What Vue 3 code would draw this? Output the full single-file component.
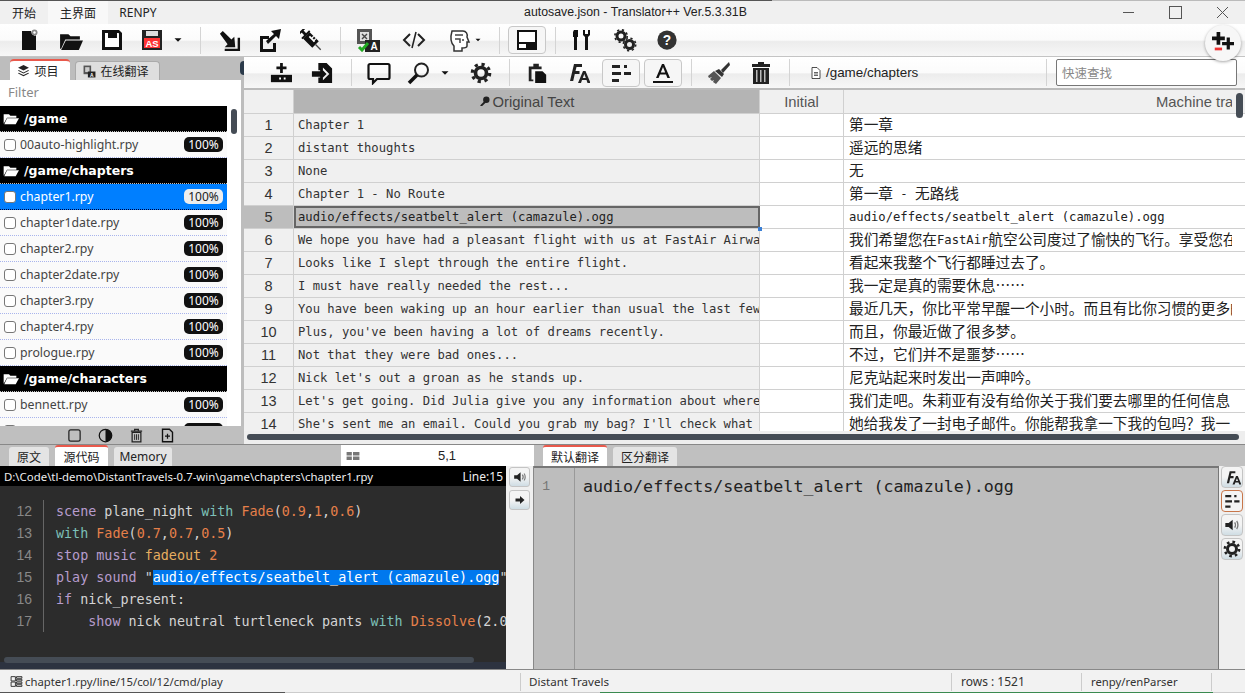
<script setup>
const icons = {
  new: '<path d="M6 3h9l1 3 3 2 1-1v15H6z" fill="#111"/><circle cx="18.500" cy="4.500" r="3" fill="#888"/><circle cx="18.500" cy="4.500" r="1.200" fill="#fff"/>',
  open: '<path d="M2 6h8l2 2h9v3H7L3 20H2z" fill="#111"/><path d="M7.500 12H24l-4 9H3z" fill="#111"/>',
  save: '<path d="M2 2h17l3 3v17H2z" fill="#111"/><path d="M5 5h3v5h9V5h1.500v0V5l.5.5V19H5z" fill="#fff"/><path d="M5 13.500h14V19H5z" fill="#fff"/><path d="M13 3.500h3v4h-3z" fill="#111"/>',
  saveas: '<path d="M2 2h20v20H2z" fill="#222"/><path d="M6 3h12v5H6z" fill="#ddd"/><path d="M4 10h16v10H4z" fill="#f33"/><text x="12" y="18.500" text-anchor="middle" font-family="Liberation Sans,sans-serif" font-weight="700" font-size="9.500" fill="#fff">AS</text>',
  caret: '<path d="M6 9h12l-6 6z" fill="#111"/>',
  imp: '<path d="M2 5l3-3 9 9 3-3 1 11H7l3-3z" fill="#111"/><path d="M20.500 9h2.500v14H7v-2.500h13.500z" fill="#111"/>',
  exp: '<path d="M3 8h9v3H6v10h10v-6h3v9H3z" fill="#111"/><path d="M9 13L17 6l-3-3 10-2-2 10-3-3-8 8z" fill="#111"/>',
  syr: '<g transform="rotate(45 12 12)"><path d="M-3 6h2v12h-2zM-1 10.500h4v3h-4zM3 6h2v12H3zM5 7h14v10H5z" fill="#111"/><path d="M8 9.500h8v2H8z" fill="#fff"/><path d="M10.500 7h1.300v4h-1.300zM14 7h1.300v4H14z" fill="#fff"/><path d="M19 11.300h8v1.400h-8z" fill="#444"/></g>',
  trans: '<path d="M1 1h15v15H1z" fill="#555"/><path d="M4 4h9v9H4z" fill="#ddd"/><path d="M6 6l5 5M11 6l-5 5" stroke="#444" stroke-width="1.400"/><path d="M9 12h15v12H9z" fill="#222"/><text x="18" y="22" text-anchor="middle" font-family="Liberation Sans,sans-serif" font-weight="700" font-size="10" fill="#fff">A</text><path d="M3 19l3 3 6-7" stroke="#2a2" stroke-width="3" fill="none"/>',
  code: '<path d="M8 6l-6 6 6 6M16 6l6 6-6 6" stroke="#222" stroke-width="2" fill="none"/><path d="M14 4l-4 16" stroke="#222" stroke-width="1.600"/>',
  head: '<path d="M5 3h11c3 0 5 3 4 6l2 5h-2v4c0 2-2 2-5 2v3H7v-5c-3-3-4-8-2-15z" fill="#fff" stroke="#333" stroke-width="1.500"/><path d="M8 7h8M8 11h5v4M15 12h2" stroke="#444" stroke-width="1.500" fill="none"/>',
  layout: '<path d="M2 2h20v20H2z" fill="#111"/><path d="M4 4h16v10H4zM4 16h7v4H4z" fill="#fff"/>',
  tools: '<path d="M4 2h4v7H7v13H4V9H3V4z" fill="#111"/><path d="M13 2v5l2 2v13h3V9l2-2V2l-2 0v4h-3V2z" fill="#111"/>',
  gears: '<g fill="none" stroke="#222"><circle cx="8" cy="8" r="4" stroke-width="3"/><circle cx="8" cy="8" r="6.200" stroke-width="1.600" stroke-dasharray="2.200 2.700"/><circle cx="16.500" cy="16.500" r="4" stroke-width="3"/><circle cx="16.500" cy="16.500" r="6.200" stroke-width="1.600" stroke-dasharray="2.200 2.700"/></g>',
  help: '<circle cx="12" cy="12" r="10.500" fill="#333"/><text x="12" y="17.500" text-anchor="middle" font-family="Liberation Sans,sans-serif" font-weight="700" font-size="15" fill="#fff">?</text>',
  addrow: '<path d="M11 1h3v4h4v3h-4v4h-3V8H7V5h4z" fill="#111"/><path d="M1 14h23v8H1z" fill="#111"/><path d="M10 17h2v2h-2zM15 17h2v2h-2z" fill="#fff"/>',
  impf: '<path d="M8 1h9l6 6v16H8v-6h5v3l7-7-7-7v3H8z" fill="#111"/><path d="M1 10h9V6l7 7-7 7v-4H1z" fill="#111"/>',
  comment: '<path d="M3 3h18a1.500 1.500 0 0 1 1.500 1.500v12A1.500 1.500 0 0 1 21 18H10l-4 4v-4H3a1.500 1.500 0 0 1-1.500-1.500v-12A1.500 1.500 0 0 1 3 3z" fill="none" stroke="#111" stroke-width="2.200"/>',
  search: '<circle cx="14.500" cy="9" r="6.500" fill="none" stroke="#222" stroke-width="2"/><path d="M10 14L2 22" stroke="#111" stroke-width="3.500"/>',
  gear: '<circle cx="12" cy="12" r="6" fill="none" stroke="#222" stroke-width="4"/><circle cx="12" cy="12" r="9.500" fill="none" stroke="#222" stroke-width="3.500" stroke-dasharray="3.500 4"/>',
  paste: '<path d="M3 5h5V2h6v3h3v3H6v11h2v2H3z" fill="#222"/><path d="M10 10h8l4 4v9H10z" fill="#111"/>',
  fonta: '<path d="M4 20L8 3h8v3h-5.500l-1 4h4v3H8.800L7.200 20z" fill="#222"/><path fill-rule="evenodd" d="M12 22l5-12h2.500l5 12h-3l-1-3H16l-1 3zM16.800 17h3l-1.500-4z" fill="#222"/>',
  align: '<path d="M3 4h8v3H3zM15 4h3v3h-3zM3 11h9v3H3zM15 11h7v3h-7zM3 18h7v3H3z" fill="#222"/>',
  under: '<path d="M5 17L11 3h2l6 14h-2.600l-1.400-3.500H9L7.600 17zM9.800 11.500h4.400L12 6z" fill="#111"/><path d="M2 20h20v2H2z" fill="#111"/>',
  brush: '<path d="M23 1l-8 8 2 3 7-8z" fill="#333"/><path d="M13 8l5 5-2 3-7-6z" fill="#333"/><path d="M8 10l7 7-5 6-3-2 1-2-2 1-2-2 2-2-3 1-1-2z" fill="#555"/>',
  trash: '<path d="M3 3h18v3H3zM9 1h6v2H9z" fill="#222"/><path d="M4 7h16v16H4z" fill="#222"/><path d="M7 9h1.500v12H7zM11 9h1.500v12H11zM15 9h1.500v12H15z" fill="#bbb"/>',
  file: '<path d="M4 1h10l6 6v16H4z" fill="#fff" stroke="#222" stroke-width="1.600"/><path d="M8 11h8M8 14h8M8 17h8" stroke="#222" stroke-width="1.400"/>',
  layers: '<path d="M12 2l10 5-10 5L2 7z" fill="#222"/><path d="M3 11l9 4.500 9-4.500 1 1.500-10 5-10-5zM3 16l9 4.500 9-4.500 1 1.500-10 5-10-5z" fill="#222"/>',
  tl: '<path d="M1 1h14v16H1z" fill="#555"/><path d="M4 4h8v9H4z" fill="#ccc"/><path d="M9 12h14v11H9z" fill="#222"/><text x="16" y="21.500" text-anchor="middle" font-family="Liberation Sans,sans-serif" font-weight="700" font-size="9" fill="#fff">A</text>',
  folder: '<path d="M1 5h8l2 2h9v3H6l-5 9z" fill="#fff"/><path d="M6 11h18l-5 9H2z" fill="#fff"/>',
  key: '<circle cx="16" cy="8" r="7" fill="#222"/><path d="M12 11l-9 9v2h4l8-8z" fill="#222"/>',
  square: '<rect x="3" y="3" width="18" height="18" rx="3" fill="none" stroke="#222" stroke-width="2"/>',
  contrast: '<circle cx="12" cy="12" r="10" fill="none" stroke="#111" stroke-width="2"/><path d="M12 2a10 10 0 0 1 0 20z" fill="#111"/>',
  bin: '<path d="M3 5h18M9 5V2h6v3" fill="none" stroke="#222" stroke-width="2"/><path d="M5 7h14v15H5z" fill="none" stroke="#222" stroke-width="2"/><path d="M9 10v9M12 10v9M15 10v9" stroke="#222" stroke-width="1.500"/>',
  newdoc: '<path d="M4 2h11l5 5v15H4z" fill="none" stroke="#111" stroke-width="2.200"/><path d="M11 9h2v3h3v2h-3v3h-2v-3H8v-2h3z" fill="#111"/>',
  speaker: '<path d="M2 9h5l6-5v16l-6-5H2z" fill="#222"/><path d="M16 8c1.500 2 1.500 6 0 8M19 6c2.500 3 2.500 9 0 12" fill="none" stroke="#777" stroke-width="2"/>',
  arrow: '<path d="M3 9h9V4l9 8-9 8v-5H3z" fill="#222"/>',
  plusplus: '<path d="M5 0h4v5h5v4H9v5H5V9H0V5h5z" fill="#111"/><path d="M16 6h3.500v5H24v3.500h-4.500V19H16v-4.500h-5V11h5z" fill="#111"/><path d="M3 17h8v3H3z" fill="#e33"/>',
  grid: '<path d="M2 3h8v8H2zM2 13h8v8H2zM12 3h10v3H12zM12 8h10v3H12zM12 13h10v3H12zM12 18h10v3H12z" fill="none" stroke="#222" stroke-width="1.600"/>',
  rows: '<path d="M1 5h9v6H1zM1 13h9v6H1zM12 5h11v6H12zM12 13h11v6H12z" fill="#777"/>',
}

const bar1 = [
  { i: 'new', w: 42, s: 24 }, { i: 'open', w: 42, s: 25 }, { i: 'save', w: 42, s: 24 }, { i: 'saveas', w: 38, s: 24 },
  { i: 'caret', w: 14, s: 14 }, { sep: 1, w: 30 }, { i: 'imp', w: 28, s: 23 }, { i: 'exp', w: 52, s: 24 },
  { i: 'syr', w: 32, s: 22 }, { sep: 1, w: 26 }, { i: 'trans', w: 30, s: 24 }, { i: 'code', w: 62, s: 24 },
  { i: 'head', w: 28, s: 24 }, { i: 'caret', w: 17, s: 10, lft: 1 }, { sep: 1, w: 18 }, { i: 'layout', w: 38, s: 24, btn: 1 },
  { sep: 1, w: 18 }, { i: 'tools', w: 36, s: 24 }, { i: 'gears', w: 50, s: 24 }, { i: 'help', w: 34, s: 22 },
]
const bar2 = [
  { i: 'addrow', w: 34, s: 22 }, { i: 'impf', w: 48, s: 22 }, { sep: 1, w: 10 }, { i: 'comment', w: 46, s: 24 },
  { i: 'search', w: 34, s: 24 }, { i: 'caret', w: 18, s: 14 }, { i: 'gear', w: 54, s: 22 }, { sep: 1, w: 2 },
  { i: 'paste', w: 54, s: 22 }, { i: 'fonta', w: 28, s: 24 }, { gap: 1, w: 10 }, { i: 'align', w: 38, s: 24, btn: 1 },
  { gap: 1, w: 4 }, { i: 'under', w: 38, s: 24, btn: 1 }, { sep: 1, w: 18 }, { i: 'brush', w: 36, s: 24 },
  { i: 'trash', w: 50, s: 24 }, { sep: 1, w: 6 },
]

const files = [
  { h: '/game' }, { n: '00auto-highlight.rpy' },
  { h: '/game/chapters' }, { n: 'chapter1.rpy', on: 1 }, { n: 'chapter1date.rpy' }, { n: 'chapter2.rpy' },
  { n: 'chapter2date.rpy' }, { n: 'chapter3.rpy' }, { n: 'chapter4.rpy' }, { n: 'prologue.rpy' },
  { h: '/game/characters' }, { n: 'bennett.rpy' }, { n: '' },
]

const rows = [
  ['Chapter 1', '第一章'],
  ['distant thoughts', '遥远的思绪'],
  ['None', '无'],
  ['Chapter 1 - No Route', '第一章 - 无路线'],
  ['audio/effects/seatbelt_alert (camazule).ogg', 'audio/effects/seatbelt_alert (camazule).ogg'],
  ['We hope you have had a pleasant flight with us at FastAir Airways.', '我们希望您在FastAir航空公司度过了愉快的飞行。享受您在'],
  ['Looks like I slept through the entire flight.', '看起来我整个飞行都睡过去了。'],
  ['I must have really needed the rest...', '我一定是真的需要休息……'],
  ['You have been waking up an hour earlier than usual the last few', '最近几天，你比平常早醒一个小时。而且有比你习惯的更多的'],
  ["Plus, you've been having a lot of dreams recently.", '而且，你最近做了很多梦。'],
  ['Not that they were bad ones...', '不过，它们并不是噩梦……'],
  ["Nick let's out a groan as he stands up.", '尼克站起来时发出一声呻吟。'],
  ["Let's get going. Did Julia give you any information about where", '我们走吧。朱莉亚有没有给你关于我们要去哪里的任何信息'],
  ["She's sent me an email. Could you grab my bag? I'll check what", '她给我发了一封电子邮件。你能帮我拿一下我的包吗？我一'],
]
const segs = (t) => t.match(/[\x00-\x7f]+|[^\x00-\x7f]+/g).map((s) => ({ s, cjk: s.charCodeAt(0) > 127 }))

const code = [
  [12, [['k', 'scene'], ['t', ' plane_night '], ['w', 'with'], ['t', ' '], ['f', 'Fade'], ['t', '('], ['f', '0.9'], ['t', ','], ['f', '1'], ['t', ','], ['f', '0.6'], ['t', ')']]],
  [13, [['w', 'with'], ['t', ' '], ['f', 'Fade'], ['t', '('], ['f', '0.7'], ['t', ','], ['f', '0.7'], ['t', ','], ['f', '0.5'], ['t', ')']]],
  [14, [['k', 'stop music'], ['t', ' '], ['y', 'fadeout'], ['t', ' '], ['f', '2']]],
  [15, [['k', 'play sound'], ['t', ' "'], ['hl', 'audio/effects/seatbelt_alert (camazule).ogg'], ['t', '"']]],
  [16, [['k', 'if'], ['t', ' nick_present:']]],
  [17, [['t', '    '], ['k', 'show'], ['t', ' nick neutral turtleneck pants '], ['w', 'with'], ['t', ' '], ['f', 'Dissolve'], ['t', '(2.0)']]],
]
</script>

<template>
  <div class="app">
    <header class="titlebar">
      <nav class="menu">
        <span class="mi m1">开始</span>
        <span class="mi m2 active">主界面</span>
        <span class="mi m3">RENPY</span>
      </nav>
      <div class="wintitle">autosave.json - Translator++ Ver.5.3.31B</div>
      <div class="winbtns">
        <svg width="13" height="13" viewBox="0 0 13 13"><path d="M1 6.500h11" stroke="#555" /></svg>
        <svg width="13" height="13" viewBox="0 0 13 13"><rect x=".5" y=".5" width="12" height="12" fill="none" stroke="#555" /></svg>
        <svg width="13" height="13" viewBox="0 0 13 13"><path d="M1 1l11 11M12 1L1 12" stroke="#555" /></svg>
      </div>
    </header>

    <div class="bar bar1">
      <template v-for="(b, n) in bar1" :key="n">
        <span v-if="b.sep" class="sep" :style="{ width: b.w + 'px' }"></span>
        <span v-else class="tool" :class="{ btn: b.btn, lft: b.lft }" :style="{ width: b.w + 'px' }">
          <svg :width="b.s" :height="b.s" viewBox="0 0 24 24" v-html="icons[b.i]"></svg>
        </span>
      </template>
      <span class="fab"><svg width="22" height="22" viewBox="0 0 24 24" v-html="icons.plusplus"></svg></span>
    </div>

    <main class="middle">
      <aside class="left">
        <div class="ltabs">
          <span class="ltab on"><svg width="13" height="13" viewBox="0 0 24 24" v-html="icons.layers"></svg>项目</span>
          <span class="ltab"><svg width="13" height="13" viewBox="0 0 24 24" v-html="icons.tl"></svg>在线翻译</span>
          <span class="notch"></span>
        </div>
        <div class="lbody">
          <div class="filter">Filter</div>
          <div class="listwrap">
            <ul class="list">
              <template v-for="(f, n) in files" :key="n">
                <li v-if="f.h" class="dir"><svg width="16" height="16" viewBox="0 0 24 24" v-html="icons.folder"></svg>{{ f.h }}</li>
                <li v-else class="file" :class="{ on: f.on }">
                  <span class="check"></span><span class="fname">{{ f.n }}</span><span class="pct">100%</span>
                </li>
              </template>
            </ul>
            <span class="lscroll"></span>
          </div>
        </div>
        <div class="lfoot">
          <svg width="15" height="15" viewBox="0 0 24 24" v-html="icons.square"></svg>
          <svg width="15" height="15" viewBox="0 0 24 24" v-html="icons.contrast"></svg>
          <svg width="15" height="15" viewBox="0 0 24 24" v-html="icons.bin"></svg>
          <svg width="15" height="15" viewBox="0 0 24 24" v-html="icons.newdoc"></svg>
        </div>
      </aside>

      <section class="right">
        <div class="bar bar2">
          <template v-for="(b, n) in bar2" :key="n">
            <span v-if="b.sep" class="sep" :style="{ width: b.w + 'px' }"></span>
            <span v-else-if="b.gap" :style="{ width: b.w + 'px' }"></span>
            <span v-else class="tool" :class="{ btn: b.btn }" :style="{ width: b.w + 'px' }">
              <svg :width="b.s" :height="b.s" viewBox="0 0 24 24" v-html="icons[b.i]"></svg>
            </span>
          </template>
          <span class="crumb"><svg width="12" height="14" viewBox="0 0 24 24" v-html="icons.file"></svg>/game/chapters</span>
          <span class="sep end"></span>
          <div class="quick">快速查找</div>
        </div>

        <div class="grid">
          <div class="ghead">
            <div class="c0 hc"></div>
            <div class="c1 hc hsel"><svg width="11" height="11" viewBox="0 0 24 24" v-html="icons.key"></svg>Original Text</div>
            <div class="c2 hc">Initial</div>
            <div class="c3 hc machine">Machine translation</div>
            <span class="vscroll"></span>
          </div>
          <div class="gbody">
            <div v-for="(r, n) in rows" :key="n" class="grow" :class="{ cur: n === 4 }">
              <div class="c0 num">{{ n + 1 }}</div>
              <div class="c1 txt">{{ r[0] }}<i v-if="n === 4" class="handle"></i></div>
              <div class="c2 init"></div>
              <div class="c3 mt">
                <span v-for="(s, k) in segs(r[1])" :key="k" :class="{ cjk: s.cjk }">{{ s.s }}</span>
              </div>
            </div>
          </div>
          <div class="hscrollbar"><span></span></div>
        </div>
      </section>
    </main>

    <section class="bottom">
      <div class="srcpane">
        <div class="tabs">
          <span class="tab t1">原文</span>
          <span class="tab on t2">源代码</span>
          <span class="tab t3">Memory</span>
          <span class="cellpos">
            <svg width="14" height="14" viewBox="0 0 24 24" v-html="icons.rows"></svg>
            <b>5,1</b>
          </span>
        </div>
        <div class="srcbody">
          <div class="srccol">
            <div class="path"><span class="pathtext">D:\Code\tl-demo\DistantTravels-0.7-win\game\chapters\chapter1.rpy</span><span>Line:15</span></div>
            <div class="code">
              <div class="lines">
                <div v-for="l in code" :key="l[0]" class="ln">
                  <span class="no">{{ l[0] }}</span>
                  <span class="src"><span v-for="(p, k) in l[1]" :key="k" :class="p[0]">{{ p[1] }}</span></span>
                </div>
              </div>
              <div class="cscroll"><span></span></div>
            </div>
          </div>
          <div class="midbtns">
            <span class="mb"><svg width="14" height="14" viewBox="0 0 24 24" v-html="icons.speaker"></svg></span>
            <span class="mb"><svg width="12" height="12" viewBox="0 0 24 24" v-html="icons.arrow"></svg></span>
          </div>
        </div>
      </div>

      <div class="trpane">
        <div class="tabs trtabs">
          <span class="tab on t4">默认翻译</span>
          <span class="tab t5">区分翻译</span>
        </div>
        <div class="trbody">
          <div class="editor">
            <div class="egutter">1</div>
            <div class="etext">audio/effects/seatbelt_alert (camazule).ogg</div>
          </div>
          <div class="sidebtns">
            <span class="sb"><svg width="17" height="17" viewBox="0 0 24 24" v-html="icons.fonta"></svg></span>
            <span class="sb hot"><svg width="18" height="18" viewBox="0 0 24 24" v-html="icons.align"></svg></span>
            <span class="sb"><svg width="16" height="16" viewBox="0 0 24 24" v-html="icons.speaker"></svg></span>
            <span class="sb"><svg width="18" height="18" viewBox="0 0 24 24" v-html="icons.gear"></svg></span>
          </div>
        </div>
      </div>
    </section>

    <footer class="status">
      <span class="st st1"><svg width="13" height="13" viewBox="0 0 24 24" v-html="icons.grid"></svg>chapter1.rpy/line/15/col/12/cmd/play</span>
      <span class="st st2">Distant Travels</span>
      <span class="st st3">rows : 1521</span>
      <span class="st st4">renpy/renParser</span>
    </footer>
  </div>
</template>

<style>
html, body { margin: 0; overflow: hidden; background: #f0f0f0; }
</style>

<style scoped>
.app { width: 1245px; height: 693px; display: flex; flex-direction: column; overflow: hidden; font-family: "Noto Sans", "Noto Sans CJK SC", sans-serif; font-size: 12px; color: #333; background: #f0f0f0; box-sizing: border-box; }
.titlebar { height: 24px; flex: none; display: flex; align-items: stretch; position: relative; background: linear-gradient(90deg, #555 62%, #bbb 62%) top / 100% 1px no-repeat, #f0f0f0; padding-top: 1px; box-sizing: border-box; }
.menu { display: flex; }
.mi { display: flex; align-items: center; justify-content: center; font-size: 12px; color: #222; }
.m1 { width: 48px; }
.m2 { width: 60px; }
.m3 { width: 60px; }
.active { background: #f8f8f8; }
.wintitle { position: absolute; left: 26px; right: 0; top: 0; bottom: 0; display: flex; align-items: center; justify-content: center; font-family: "Liberation Sans", sans-serif; font-size: 12.300px; color: #222; }
.winbtns { margin-left: auto; display: flex; align-items: center; gap: 34px; padding-right: 16px; z-index: 1; }
.winbtns svg { display: block; }

.bar { display: flex; align-items: center; box-sizing: border-box; background: linear-gradient(#fff 0, #fbfbfb 50%, #ececec 55%, #f7f7f7 100%); }
.bar1 { height: 33px; flex: none; padding-left: 7px; border-bottom: 1px solid #c4c4c4; position: relative; z-index: 3; }
.tool { height: 28px; flex: none; display: flex; align-items: center; justify-content: center; box-sizing: border-box; }
.tool.lft { justify-content: flex-start; }
.tool.btn { border: 1px solid #c8c8c8; border-radius: 4px; background: #f6f6f6; }
.tool svg { display: block; }
.sep { height: 27px; flex: none; display: block; background: linear-gradient(#d4d4d4, #d4d4d4) center / 1px 100% no-repeat; }
.fab { position: absolute; right: 4px; top: 1px; width: 36px; height: 36px; display: flex; align-items: center; justify-content: center; border-radius: 50%; background: #f7f7f7; box-shadow: 0 1px 3px rgba(0,0,0,.35); }

.middle { height: 387px; flex: none; display: flex; background: #bdbdbd; }
.left { width: 244px; flex: none; display: flex; flex-direction: column; background: #bdbdbd; position: relative; }
.ltabs { height: 23px; flex: none; display: flex; align-items: flex-end; padding-left: 10px; gap: 5px; position: relative; }
.ltab { height: 19px; display: flex; align-items: center; justify-content: center; gap: 4px; box-sizing: border-box; border: 1px solid #aaa; border-bottom: 0; border-radius: 4px 4px 0 0; background: #dedede; color: #222; width: 85px; font-size: 12px; padding-right: 3px; }
.ltab.on { width: 60px; height: 21px; background: #fff; border: 0; border-top: 2px solid #e9594c; padding-right: 4px; }
.notch { position: absolute; right: 0; top: 4px; width: 4px; height: 14px; background: #2b3a4a; border-radius: 4px 0 0 4px; }
.lbody { flex: 1; min-height: 0; margin-right: 3px; background: #fff; display: flex; flex-direction: column; }
.filter { height: 26px; flex: none; display: flex; align-items: center; padding: 0 0 2px 8px; font-size: 13px; color: #888; box-sizing: border-box; }
.listwrap { flex: 1; min-height: 0; display: flex; overflow: hidden; }
.list { width: 227px; flex: none; margin: 0; padding: 0; list-style: none; }
.dir { height: 26px; background: #000; color: #fff; display: flex; align-items: center; font-family: "DejaVu Sans", sans-serif; font-weight: 700; font-size: 12.500px; gap: 5px; padding-left: 3px; box-sizing: border-box; border-bottom: 1px dotted #bbb; }
.file { height: 26px; display: flex; align-items: center; padding-left: 4px; padding-right: 4px; background: #fafafa; box-sizing: border-box; border-bottom: 1px dotted #a8b4ec; color: #444; }
.file.on { background: #007fff; color: #fff; border-bottom-color: #003; }
.check { width: 12px; height: 12px; flex: none; border: 1px solid #777; border-radius: 3px; background: #fff; margin-right: 4px; box-sizing: border-box; }
.fname { flex: 1; font-size: 12.300px; }
.pct { width: 39px; height: 15px; border-radius: 5px; background: #111; color: #fff; display: flex; align-items: center; justify-content: center; font-size: 12px; }
.file.on .pct { background: #eee; color: #222; }
.lscroll { width: 6px; height: 25px; margin: 3px 0 0 4px; border-radius: 3px; background: #454c55; }
.lfoot { height: 18px; flex: none; display: flex; align-items: center; padding-left: 67px; gap: 16px; background: #bfbfbf; }
.lfoot svg { display: block; }

.right { flex: 1; min-width: 0; display: flex; flex-direction: column; }
.bar2 { height: 33px; flex: none; padding-left: 20px; border-bottom: 2px solid #bbb; }
.crumb { display: flex; align-items: center; gap: 4px; margin-left: 18px; font-size: 13.400px; font-family: "Liberation Sans", sans-serif; color: #222; }
.sep.end { width: 1px; margin-left: auto; }
.quick { width: 181px; height: 27px; margin: 0 8px 0 9px; border: 1px solid #777; border-radius: 2px; background: #fff; box-sizing: border-box; display: flex; align-items: center; padding-left: 5px; font-size: 12.500px; color: #888; }

.grid { flex: 1; min-height: 0; position: relative; overflow: hidden; background: #fff; }
.ghead { height: 24px; display: flex; background: #f0f0f0; border-bottom: 1px solid #d0d0d0; box-sizing: border-box; position: relative; }
.c0 { width: 50px; flex: none; }
.c1 { width: 466px; flex: none; }
.c2 { width: 84px; flex: none; }
.c3 { flex: 1; min-width: 0; }
.hc { display: flex; align-items: center; justify-content: center; gap: 3px; box-sizing: border-box; border-right: 1px solid #d0d0d0; font-family: "Liberation Sans", sans-serif; font-size: 14.800px; color: #555; }
.hc.hsel { background: #b4b4b4; color: #444; }
.hc.machine { justify-content: flex-start; padding-left: 312px; margin-right: 13px; overflow: hidden; white-space: nowrap; border: 0; }
.vscroll { position: absolute; right: 2px; top: 3px; width: 7px; height: 25px; border-radius: 4px; background: #454c55; z-index: 2; }
.gbody { overflow: hidden; }
.grow { height: 23px; display: flex; box-sizing: border-box; border-bottom: 1px solid #d0d0d0; }
.num { background: #f0f0f0; border-right: 1px solid #d0d0d0; box-sizing: border-box; display: flex; align-items: center; justify-content: center; font-family: "Liberation Sans", sans-serif; font-size: 14.500px; color: #333; }
.cur .num { background: #bdbdbd; }
.txt { background: #f0f0f0; border-right: 1px solid #d0d0d0; box-sizing: border-box; padding-left: 4px; line-height: 22px; white-space: nowrap; overflow: hidden; font-family: "DejaVu Sans Mono", monospace; font-size: 12.200px; color: #333; }
.cur .txt { background: #bdbdbd; outline: 2px solid #666; outline-offset: -2px; position: relative; overflow: visible; color: #222; }
.handle { position: absolute; right: -3px; bottom: -3px; width: 4px; height: 4px; background: #3a7fd5; }
.init { border-right: 1px solid #d0d0d0; box-sizing: border-box; }
.mt { padding-left: 5px; line-height: 22px; white-space: nowrap; overflow: hidden; margin-right: 13px; font-family: "DejaVu Sans Mono", monospace; font-size: 12.200px; color: #222; display: flex; align-items: flex-start; }
.mt span { white-space: pre; }
.mt .cjk { font-family: "Noto Sans CJK SC", sans-serif; font-size: 14.670px; line-height: 20px; color: #222; }
.hscrollbar { position: absolute; left: 0; right: 0; bottom: 0; height: 13px; background: #eeeeee; padding: 3px 6px 0 3px; box-sizing: border-box; }
.hscrollbar span { display: block; width: 100%; height: 6px; border-radius: 3px; background: #454c55; }

.bottom { height: 225px; flex: none; display: flex; background: #bdbdbd; border-top: 1px solid #888; box-sizing: border-box; }
.srcpane { width: 534px; flex: none; display: flex; flex-direction: column; }
.trpane { flex: 1; min-width: 0; display: flex; flex-direction: column; }
.tabs { height: 21px; flex: none; display: flex; align-items: flex-end; position: relative; background: #c0c0c0; padding-left: 9px; gap: 6px; }
.tab { height: 19px; display: flex; align-items: center; justify-content: center; background: #e4e4e4; font-size: 12px; color: #222; border-radius: 3px 3px 0 0; box-sizing: border-box; }
.tab.on { height: 21px; background: #fff; border-top: 2px solid #e9594c; }
.t1 { width: 40px; }
.t2 { width: 53px; }
.t3 { width: 58px; }
.t4 { width: 64px; }
.t5 { width: 64px; }
.cellpos { position: absolute; left: 341px; top: 0; bottom: 0; width: 193px; background: #fff; display: flex; align-items: center; }
.cellpos svg { margin-left: 5px; }
.cellpos b { font-weight: 400; font-family: "Liberation Sans", sans-serif; font-size: 13px; color: #222; margin-left: 78px; }
.srcbody { flex: 1; min-height: 0; display: flex; }
.srccol { width: 506px; flex: none; display: flex; flex-direction: column; min-height: 0; }
.path { height: 20px; flex: none; background: #000; color: #eee; font-size: 12px; display: flex; align-items: center; justify-content: space-between; padding: 0 3px 0 4px; box-sizing: border-box; white-space: nowrap; overflow: hidden; }
.pathtext { font-size: 11.400px; }
.code { flex: 1; min-height: 0; background: #2c2c2c; display: flex; flex-direction: column; overflow: hidden; }
.lines { flex: 1; padding-top: 14px; overflow: hidden; font-family: "DejaVu Sans Mono", monospace; font-size: 13.400px; }
.ln { height: 22px; display: flex; align-items: center; white-space: pre; }
.no { width: 44px; flex: none; height: 22px; line-height: 22px; box-sizing: border-box; padding-right: 11px; text-align: right; color: #888; font-family: "Liberation Sans", sans-serif; font-size: 14px; border-right: 1px solid #666; }
.src { padding-left: 12px; white-space: pre; }
.t { color: #d4d4d4; }
.k { color: #b79ccd; }
.w { color: #7cc0b8; }
.f { color: #e6804a; }
.y { color: #e6ae60; }
.hl { background: #0078ee; color: #fff; }
.cscroll { height: 24px; flex: none; padding: 12px 32px 0 4px; box-sizing: border-box; background: linear-gradient(#2c2c2c 17px, #2d3340 17px); }
.cscroll span { display: block; height: 6px; border-radius: 3px; background: #454c55; }
.midbtns { width: 28px; flex: none; background: #f0f0f0; padding: 1px 0 0 3px; box-sizing: border-box; display: flex; flex-direction: column; gap: 3px; border-right: 1px solid #888; }
.mb { width: 21px; height: 20px; display: flex; align-items: center; justify-content: center; border: 1px solid #c4c4c4; border-radius: 3px; background: linear-gradient(#f4f4f4 50%, #cfdde4); box-sizing: border-box; }
.trbody { flex: 1; min-height: 0; display: flex; }
.editor { flex: 1; min-width: 0; display: flex; background: #bdbdbd; border-top: 2px solid #777; border-right: 1px solid #777; box-sizing: border-box; }
.egutter { width: 41px; flex: none; padding-top: 11px; padding-right: 24px; box-sizing: border-box; text-align: right; border-right: 1px solid #999; color: #777; font-family: "Liberation Mono", monospace; font-size: 13px; }
.etext { padding: 9px 0 0 8px; font-family: "DejaVu Sans Mono", monospace; font-size: 16.650px; color: #222; white-space: nowrap; }
.sidebtns { width: 26px; flex: none; background: #efefef; display: flex; flex-direction: column; gap: 2px; padding: 0 0 0 2px; box-sizing: border-box; }
.sb { width: 22px; height: 22px; display: flex; align-items: center; justify-content: center; border: 1px solid #c4c4c4; border-radius: 4px; background: linear-gradient(#f4f4f4 50%, #cfdde4); box-sizing: border-box; }
.sb.hot { border-color: #c8764a; background: #f4f4f4; }

.status { flex: 1; min-height: 0; display: flex; align-items: center; background: linear-gradient(90deg, #555 285px, #ccc 285px, #ccc 600px, #3a8a50 600px, #3a8a50 1213px, #ccc 1213px) bottom / 100% 1px no-repeat, #f2f2f2; border-top: 1px solid #888; box-sizing: border-box; font-size: 12px; color: #333; }
.st { height: 18px; display: flex; align-items: center; gap: 2px; box-sizing: border-box; white-space: nowrap; }
.st1 { width: 520px; padding-left: 10px; font-size: 11.300px; }
.st2 { width: 431px; padding-left: 8px; border-left: 1px solid #ccc; font-size: 11.600px; }
.st3 { width: 130px; padding-left: 9px; border-left: 1px solid #ccc; }
.st4 { width: 131px; padding-left: 9px; border-left: 1px solid #ccc; border-right: 1px solid #ccc; font-size: 11.300px; }
</style>
